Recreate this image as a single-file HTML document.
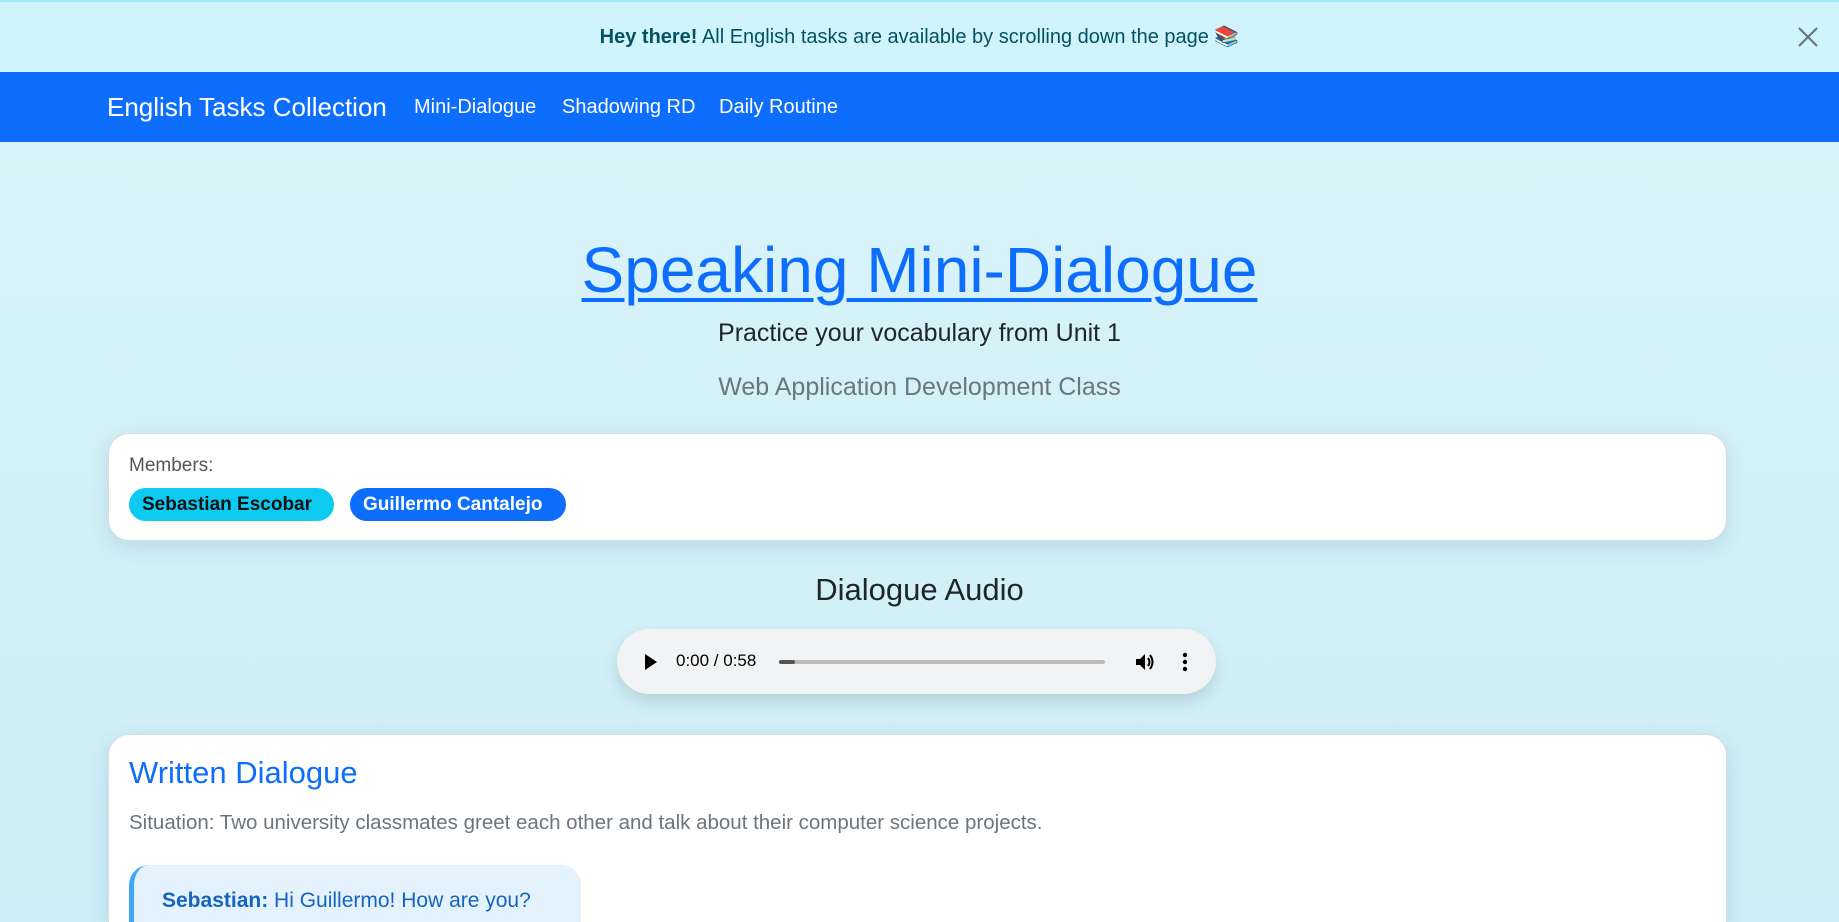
<!DOCTYPE html>
<html><head><meta charset="utf-8"><style>
*{box-sizing:border-box;margin:0;padding:0}
html,body{width:1839px;height:922px;overflow:hidden}
body{font-family:"Liberation Sans",sans-serif;background:#d5f1f9}
#w{position:relative;width:1839px;height:922px;overflow:hidden;background:linear-gradient(180deg,#dcf4fa 0%,#d2f0f8 60%,#cdeef6 100%)}
.banner{position:absolute;left:0;top:0;width:1839px;height:72px;background:#cff4fc;border-top:2px solid #9eeaf9;color:#055160;font-size:20px;text-align:center;line-height:70px}
.close{position:absolute;right:20px;top:24px}
.nav{position:absolute;top:72px;left:0;width:1839px;height:70px;background:#0d6efd;color:#fff}
.brand{position:absolute;left:107px;top:20px;font-size:26px}
.link{position:absolute;top:24px;font-size:20px;color:#fff}
h1{position:absolute;top:233px;width:1839px;text-align:center;font-size:64px;font-weight:normal;color:#0d6efd;text-decoration:underline;text-decoration-thickness:4px;text-underline-offset:6px}
.sub{position:absolute;top:319px;width:1839px;text-align:center;font-size:25px;color:#212529}
.cls{position:absolute;top:373px;width:1839px;text-align:center;font-size:25px;color:#6c757d}
.card{position:absolute;left:108px;width:1619px;background:#fff;border-radius:21px;border:1px solid #d5dde2;box-shadow:0 6px 20px rgba(0,60,90,.12)}
.badge{position:absolute;top:54px;height:33px;border-radius:17px;font-weight:bold;font-size:19px;line-height:33px;padding:0 13px}
.da{position:absolute;top:572px;width:1839px;text-align:center;font-size:31px;color:#212529}
.audio{position:absolute;left:617px;top:629px;width:599px;height:65px;background:#f1f3f4;border-radius:33px;box-shadow:0 8px 16px rgba(0,0,0,.12)}
</style></head><body><div id="w">
<div class="banner"><b>Hey there!</b> All English tasks are available by scrolling down the page 📚
<svg class="close" width="22" height="22" viewBox="0 0 22 22"><path d="M2 2L20 20M20 2L2 20" stroke="#6c757d" stroke-width="2.2"/></svg></div>
<div class="nav"><div class="brand">English Tasks Collection</div>
<div class="link" style="left:414px">Mini-Dialogue</div><div class="link" style="left:562px">Shadowing RD</div><div class="link" style="left:719px">Daily Routine</div></div>
<h1>Speaking Mini-Dialogue</h1>
<div class="sub">Practice your vocabulary from Unit 1</div>
<div class="cls">Web Application Development Class</div>
<div class="card" style="top:433px;height:108px">
<div style="position:absolute;left:20px;top:21px;font-size:19px;color:#555">Members:</div>
<div class="badge" style="left:20px;width:205px;background:#0dcaf0;color:#111">Sebastian Escobar</div>
<div class="badge" style="left:241px;width:216px;background:#0d6efd;color:#fff">Guillermo Cantalejo</div>
</div>
<div class="da">Dialogue Audio</div>
<div class="audio">
<svg style="position:absolute;left:27px;top:25px" width="14" height="16"><path d="M1 0L13 8L1 16Z" fill="#000"/></svg>
<div style="position:absolute;left:59px;top:22px;font-size:17px;color:#000">0:00 / 0:58</div>
<div style="position:absolute;left:162px;top:31px;width:326px;height:4px;background:#bbb;border-radius:2px"><div style="width:16px;height:4px;background:#555;border-radius:2px"></div></div>
<svg style="position:absolute;left:517px;top:22px" width="22" height="22" viewBox="0 0 22 22"><path d="M2 8H6L11 3V19L6 14H2Z" fill="#000"/><path d="M14 7Q17 11 14 15M16 4Q21 11 16 18" stroke="#000" stroke-width="2" fill="none"/></svg>
<svg style="position:absolute;left:565px;top:22px" width="6" height="22"><circle cx="3" cy="4" r="2.2"/><circle cx="3" cy="11" r="2.2"/><circle cx="3" cy="18" r="2.2"/></svg>
</div>
<div class="card" style="top:734px;height:188px;border-bottom:none;border-radius:21px 21px 0 0;overflow:hidden">
<div style="position:absolute;left:20px;top:20px;font-size:31px;color:#0d6efd">Written Dialogue</div>
<div style="position:absolute;left:20px;top:76px;font-size:20.5px;color:#6c757d">Situation: Two university classmates greet each other and talk about their computer science projects.</div>
<div style="position:absolute;left:20px;top:130px;width:452px;height:70px;background:#e3f2fd;border-left:5px solid #42a5f5;border-radius:20px 20px 0 0">
<div style="position:absolute;left:28px;top:24px;font-size:21px;color:#1565c0;white-space:nowrap"><b>Sebastian:</b> Hi Guillermo! How are you?</div></div>
</div>
</div></body></html>
